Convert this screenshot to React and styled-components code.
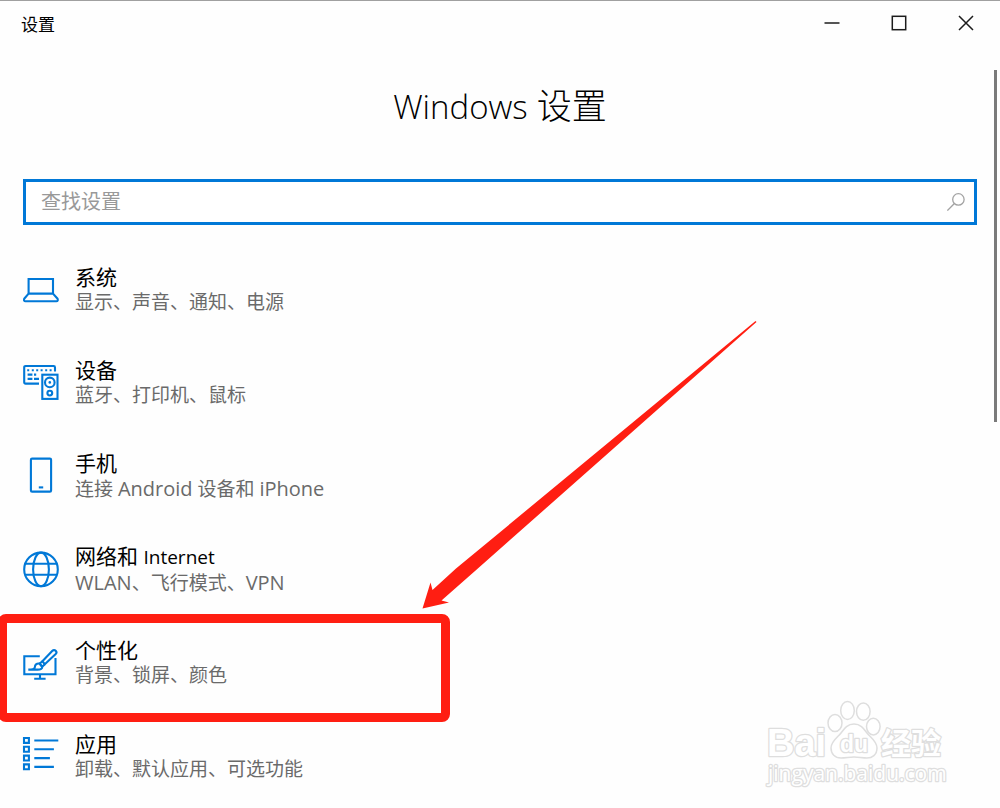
import React from "react";
import styled, { createGlobalStyle } from "styled-components";

const Global = createGlobalStyle`
  *, *::before, *::after { box-sizing: border-box; }
  body {
    margin: 0;
    background: #fefefe;
    color: #000;
    font-family: "Open Sans", "Noto Sans CJK SC", sans-serif;
  }
`;

const Window = styled.div`
  position: relative;
  display: flex;
  flex-direction: column;
  min-height: 100vh;
  overflow: hidden;
  border-top: 1px solid #a0a0a0;
`;

const TitleBar = styled.header`
  display: flex;
  align-items: flex-start;
  justify-content: space-between;
  height: 46px;
  padding: 0 1px 0 21px;
`;

const AppName = styled.span`
  font-size: 17px;
  line-height: 48px;
`;

const Controls = styled.div`
  display: flex;
`;

const ControlButton = styled.button`
  display: flex;
  align-items: center;
  justify-content: center;
  width: 67px;
  height: 44px;
  padding: 0;
  border: 0;
  background: transparent;
  color: #1c1c1c;
  &:hover { background: #e5e5e5; }
`;

const Main = styled.main`
  display: flex;
  flex: 1;
  flex-direction: column;
  padding-bottom: 5px;
`;

const Heading = styled.h1`
  margin: 34px 0 47px;
  font-size: 35px;
  font-weight: 300;
  line-height: 50px;
  text-align: center;
`;

const HeadingLatin = styled.span`
  font-size: 33px;
`;

const SearchBox = styled.label`
  display: flex;
  align-items: center;
  height: 46px;
  margin: 0 23px 18px;
  padding: 0 9px 0 15px;
  border: 3px solid #0078d7;
  background: #fff;
`;

const SearchInput = styled.input`
  flex: 1;
  min-width: 0;
  padding: 0;
  border: 0;
  outline: 0;
  background: transparent;
  font: 20px/28px "Open Sans", "Noto Sans CJK SC", sans-serif;
  &::placeholder { color: #999; opacity: 1; }
`;

const List = styled.nav`
  display: grid;
  flex: 1;
  grid-auto-rows: minmax(93px, 1fr);
`;

const Row = styled.div`
  position: relative;
  display: flex;
`;

const Entry = styled.a`
  display: flex;
  flex: 1;
  align-items: center;
  gap: 16px;
  padding: 0 23px;
  color: inherit;
  text-decoration: none;
`;

const Icon = styled.svg`
  flex: none;
  width: 36px;
  height: 36px;
  overflow: visible;
  fill: none;
  stroke: #0078d7;
  stroke-width: 2.1;
`;

const Label = styled.span`
  display: flex;
  flex-direction: column;
`;

const Title = styled.span`
  font-size: 21px;
  line-height: 26px;
`;

const TitleLatin = styled.span`
  font-size: 19px;
`;

const Detail = styled.span`
  color: #6a6a6a;
  font-size: 19px;
  line-height: 25px;
`;

const DetailLatin = styled.span`
  font-size: 20px;
`;

const Highlight = styled.div`
  position: absolute;
  top: -2px;
  bottom: -12px;
  left: -2px;
  width: 452px;
  border: 9px solid #ff1e12;
  border-radius: 8px;
  pointer-events: none;
`;

const Arrow = styled.svg`
  position: absolute;
  top: -295px;
  left: 422px;
  width: 335px;
  height: 288px;
  fill: #ff1e12;
  pointer-events: none;
`;

const ScrollThumb = styled.div`
  position: absolute;
  top: 69px;
  right: 3px;
  width: 3px;
  height: 352px;
  background: #7a7a7a;
`;

const Watermark = styled.svg`
  position: absolute;
  right: 50px;
  bottom: 18px;
  width: 184px;
  height: 92px;
  overflow: visible;
  fill: #fff;
  stroke: #dedede;
  stroke-width: 1.5;
  pointer-events: none;
  text { paint-order: stroke; stroke-width: 2.6; stroke-linejoin: round; }
`;

const icons = {
  system: (
    <>
      <path d="M5.6 21.6V7H30v14.6" />
      <path d="M5.6 21.6H30l4.6 5.2q.8 2.4-1.2 2.4H2.4q-2 0-1.2-2.4Z" strokeLinejoin="round" />
    </>
  ),
  devices: (
    <>
      <path d="M16 18.6H2.6Q1.2 18.6 1.2 17.2V2.4Q1.2 1 2.6 1H30.6Q32 1 32 2.4V6.4" />
      <path d="M4.2 5.2h2m2.6 0h2m2.4 0h2m2.4 0h2m2.6 0h2m2.4 0h2M4.6 9.6h4.8m1.6 0h2.2M4.6 13.9h4.8m1.6 0h5" />
      <rect x="19.3" y="9.7" width="15.2" height="24.2" />
      <circle cx="26.8" cy="17.4" r="4.8" />
      <circle cx="26.8" cy="17.4" r="1.3" fill="#0078d7" stroke="none" />
      <circle cx="26.8" cy="28.1" r="2.4" />
    </>
  ),
  phone: (
    <>
      <rect x="7.9" y=".6" width="20.2" height="33" rx="1.2" />
      <path d="M15.8 29.4h4.4" />
    </>
  ),
  network: (
    <>
      <circle cx="18" cy="17.4" r="16.8" />
      <ellipse cx="18" cy="17.4" rx="7.9" ry="16.8" />
      <path d="M2.4 11.8h31.2M2.4 22.8h31.2" />
    </>
  ),
  personal: (
    <>
      <path d="M16.8 11.3H1.3v17.9h31.2V13M17 29.2v4.4M11.2 33.8h11.4" />
      <path d="M19.4 16.2 29.4 5.8a2.3 2.3 0 0 1 3.3 3.3L21.8 19.2Z" />
      <path d="M19.4 16.2 16.6 18.6 19.2 21.8 21.8 19.2" />
      <path d="M16.6 18.6c-3.2-.5-4.7 1.4-4.7 3.4 0 1.6-2.2 2.6-6.6 2.6h9.2c3.4 0 4.9-1.1 4.7-2.8Z" />
    </>
  ),
  apps: (
    <>
      <path d="M1 0h4.9v4.9H1zM1 8.8h4.9v4.9H1zM1 17.6h4.9v4.9H1zM1 26.4h4.9v4.9H1z" />
      <path d="M11.3 2.5h24M11.3 11.3h19.6M11.3 20.1h15.6M11.3 28.9h19.6" />
    </>
  ),
};

const entries = [
  { id: "system", title: "系统", detail: "显示、声音、通知、电源" },
  { id: "devices", title: "设备", detail: "蓝牙、打印机、鼠标" },
  { id: "phone", title: "手机", detail: "连接 Android 设备和 iPhone" },
  { id: "network", title: "网络和 Internet", detail: "WLAN、飞行模式、VPN" },
  { id: "personal", title: "个性化", detail: "背景、锁屏、颜色", marked: true },
  { id: "apps", title: "应用", detail: "卸载、默认应用、可选功能" },
];

// Wraps each run of Latin letters, so that it can take its own size beside the Chinese text.
const mixed = (text, Latin) =>
  text
    .split(/([A-Za-z]+)/)
    .map((part, i) => (i % 2 ? <Latin key={i}>{part}</Latin> : part));

export default function App() {
  return (
    <Window>
      <Global />
      <TitleBar>
        <AppName>设置</AppName>
        <Controls>
          <ControlButton aria-label="最小化">
            <svg width="16" height="16" fill="none" stroke="currentColor" strokeWidth="1.5">
              <path d="M.5 8h15" />
            </svg>
          </ControlButton>
          <ControlButton aria-label="最大化">
            <svg width="16" height="16" fill="none" stroke="currentColor" strokeWidth="1.5">
              <rect x="1.3" y="1.3" width="13.4" height="13.4" />
            </svg>
          </ControlButton>
          <ControlButton aria-label="关闭">
            <svg width="16" height="16" fill="none" stroke="currentColor" strokeWidth="1.5">
              <path d="m1 1 14 14M15 1 1 15" />
            </svg>
          </ControlButton>
        </Controls>
      </TitleBar>
      <Main>
        <Heading>{mixed("Windows 设置", HeadingLatin)}</Heading>
        <SearchBox>
          <SearchInput type="text" placeholder="查找设置" aria-label="查找设置" />
          <svg width="18" height="18" fill="none" stroke="#a3a3a3" strokeWidth="1.3">
            <circle cx="11.4" cy="6.4" r="5.7" />
            <path d="M7.4 10.5.4 17.6" />
          </svg>
        </SearchBox>
        <List>
          {entries.map(({ id, title, detail, marked }) => (
            <Row key={id}>
              <Entry href={`#${id}`}>
                <Icon viewBox="0 0 36 36" aria-hidden="true">{icons[id]}</Icon>
                <Label>
                  <Title>{mixed(title, TitleLatin)}</Title>
                  <Detail>{mixed(detail, DetailLatin)}</Detail>
                </Label>
              </Entry>
              {marked && (
                <>
                  <Highlight />
                  <Arrow viewBox="0 0 335 288" aria-hidden="true">
                    <path d="M333.500 0 34 247.500 10.500 269 8.500 261.500.500 287.500 27 281.500 19.500 279.500 53 250 334.500 1Z" />
                  </Arrow>
                </>
              )}
            </Row>
          ))}
        </List>
      </Main>
      <ScrollThumb />
      <Watermark viewBox="0 0 184 92">
        <ellipse cx="69" cy="25" rx="7" ry="8.600" />
        <ellipse cx="81.500" cy="12.500" rx="6.800" ry="9" />
        <ellipse cx="97.300" cy="13.600" rx="6.800" ry="8.700" />
        <ellipse cx="107.300" cy="28.600" rx="6.800" ry="8.300" />
        <path d="M88 26c7 0 10 5 13 9s10 8 10 15-5 10-10 10c-5 0-8-1-13-1s-8 1-13 1c-6 0-10-4-10-10 0-7 7-11 10-15s6-9 13-9Z" />
        <g fontFamily="Liberation Sans, sans-serif" fontWeight="700">
          <text x="1" y="58" fontSize="38">Bai</text>
          <text x="74" y="54" fontSize="23">du</text>
        </g>
        <text x="115" y="56" fontSize="30" fontWeight="700" fontFamily="Noto Sans CJK SC, sans-serif">经验</text>
        <text x="2" y="83" fontSize="21" fontFamily="Open Sans, sans-serif">jingyan.baidu.com</text>
      </Watermark>
    </Window>
  );
}
